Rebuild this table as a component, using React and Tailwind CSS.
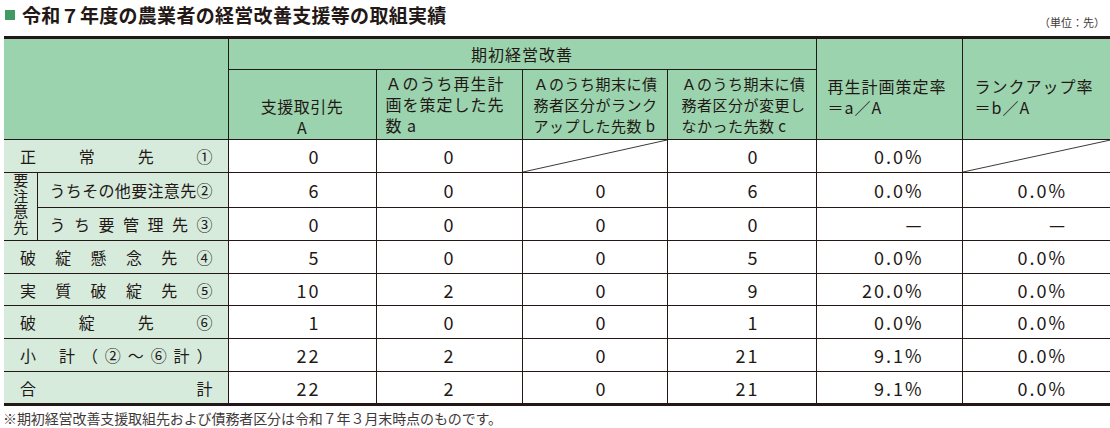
import React from "react";

const ink = "text-[#231815]";

const Diagonal = () => (
  <svg className="absolute inset-0 w-full h-full" viewBox="0 0 100 100" preserveAspectRatio="none">
    <line x1="0" y1="100" x2="100" y2="0" stroke="#3a3a3a" strokeWidth="1" vectorEffect="non-scaling-stroke" />
  </svg>
);

// right padding per data column, tuned so digits line up like the print
const pads = ["pr-[55px]", "pr-[66px]", "pr-[59px]", "pr-[56px]", "pr-[38px]", "pr-[43px]"];

const rows = [
  { label: ["正", "常", "先", "①"], v: ["0", "0", null, "0", "0.0%", null] },
  { sub: true, first: true, label: ["う", "ち", "そ", "の", "他", "要", "注", "意", "先", "②"], v: ["6", "0", "0", "6", "0.0%", "0.0%"] },
  { sub: true, label: ["う", "ち", "要", "管", "理", "先", "③"], v: ["0", "0", "0", "0", "—", "—"] },
  { label: ["破", "綻", "懸", "念", "先", "④"], v: ["5", "0", "0", "5", "0.0%", "0.0%"] },
  { label: ["実", "質", "破", "綻", "先", "⑤"], v: ["10", "2", "0", "9", "20.0%", "0.0%"] },
  { label: ["破", "綻", "先", "⑥"], v: ["1", "0", "0", "1", "0.0%", "0.0%"] },
  { label: "subtotal", v: ["22", "2", "0", "21", "9.1%", "0.0%"] },
  { label: ["合", "計"], v: ["22", "2", "0", "21", "9.1%", "0.0%"] },
];

const heights = ["h-[33px]", "h-[33px]", "h-[32px]", "h-[33px]", "h-[32px]", "h-[33px]", "h-[33px]", "h-[33px]"];

const Label = ({ row }) => {
  if (row.label === "subtotal") {
    return (
      <div className="flex items-center pl-[16px] pr-[15px]">
        <span>小</span>
        <div className="flex-1 flex justify-between pl-[23px]">
          {["計", "（", "②", "～", "⑥", "計", "）"].map((c, i) => (
            <span key={i}>{c}</span>
          ))}
        </div>
      </div>
    );
  }
  return (
    <div className={`flex justify-between ${row.sub ? "pl-[12px] pr-[15px]" : "pl-[16px] pr-[15px]"}`}>
      {row.label.map((c, i) => (
        <span key={i}>{c}</span>
      ))}
    </div>
  );
};

const head = "bg-[#9bd3ae] border border-[#231815] font-normal whitespace-nowrap";

export default function App() {
  return (
    <div className={`w-[1110px] h-[428px] bg-white overflow-hidden font-['Noto_Sans_CJK_JP',sans-serif] ${ink}`}>
      {/* title */}
      <div className="flex justify-between h-[36px] pl-[5px] pr-[5px]">
        <h1 className="flex items-center gap-[7px] pt-[5px] self-start text-[19px] leading-[19px] font-bold tracking-[0.3px]">
          <span className="w-[10px] h-[10px] bg-[#3f9b62] shrink-0" />
          令和７年度の農業者の経営改善支援等の取組実績
        </h1>
        <span className="self-end pb-[8px] text-[11px] leading-[11px] text-[#3e3a39]">（単位：先）</span>
      </div>

      <div className="pl-[4px]">
        <table className="table-fixed border-collapse w-[1106px] border-t-[3px] border-b-[3px] border-[#231815]">
          <colgroup>
            <col className="w-[33px]" />
            <col className="w-[191px]" />
            <col className="w-[148px]" />
            <col className="w-[146px]" />
            <col className="w-[145px]" />
            <col className="w-[149px]" />
            <col className="w-[146px]" />
            <col className="w-[148px]" />
          </colgroup>
          <thead className="text-[16px] leading-[21px] tracking-[1px]">
            <tr className="h-[32px]">
              <th colSpan={2} rowSpan={2} className="bg-[#9bd3ae] border-r border-b border-[#231815]" />
              <th colSpan={4} className={`${head} text-center p-0`}>
                期初経営改善
              </th>
              <th rowSpan={2} className={`${head} text-left align-middle pl-[11px] pt-[16px] pb-0`}>
                再生計画策定率
                <br />
                ＝a／A
              </th>
              <th rowSpan={2} className={`${head} border-r-0 text-left align-middle pl-[12px] pt-[16px] pb-0`}>
                ランクアップ率
                <br />
                ＝b／A
              </th>
            </tr>
            <tr className="h-[70px]">
              <th className={`${head} text-center align-middle pt-[24px] pb-0 tracking-[0.5px]`}>
                支援取引先
                <br />A
              </th>
              <th className={`${head} text-left align-middle pl-[9px] p-0`}>
                Ａのうち再生計
                <br />
                画を策定した先
                <br />数 a
              </th>
              <th className={`${head} text-left align-middle pl-[11px] p-0 text-[15px] tracking-[0.5px]`}>
                Ａのうち期末に債
                <br />
                務者区分がランク
                <br />
                アップした先数 b
              </th>
              <th className={`${head} text-left align-middle pl-[14px] p-0 text-[15px] tracking-[0.5px]`}>
                Ａのうち期末に債
                <br />
                務者区分が変更し
                <br />
                なかった先数 c
              </th>
            </tr>
          </thead>
          <tbody>
            {rows.map((row, r) => (
              <tr key={r} className={heights[r]}>
                {row.sub && row.first && (
                  <td rowSpan={2} className="bg-[#d7ebdd] border-b border-r border-[#231815] align-middle text-center p-0">
                    <span className="inline-block [writing-mode:vertical-rl] text-[15px] leading-none tracking-[0.5px] pl-[1px]">
                      要注意先
                    </span>
                  </td>
                )}
                <td
                  colSpan={row.sub ? 1 : 2}
                  className="bg-[#d7ebdd] border-b border-r border-[#231815] text-[16px] leading-none align-middle p-0"
                >
                  <Label row={row} />
                </td>
                {row.v.map((v, i) => (
                  <td
                    key={i}
                    className={`relative border border-[#231815] border-t-0 ${i === 5 ? "border-r-0" : ""} text-right text-[18px] tracking-[2px] leading-none align-middle py-0 ${pads[i]}`}
                  >
                    {v === null ? <Diagonal /> : v}
                  </td>
                ))}
              </tr>
            ))}
          </tbody>
        </table>
      </div>

      <p className="pl-[3px] pt-[2px] text-[14px] leading-[20px] tracking-[-0.1px] text-[#3e3a39]">
        ※期初経営改善支援取組先および債務者区分は令和７年３月末時点のものです。
      </p>
    </div>
  );
}
